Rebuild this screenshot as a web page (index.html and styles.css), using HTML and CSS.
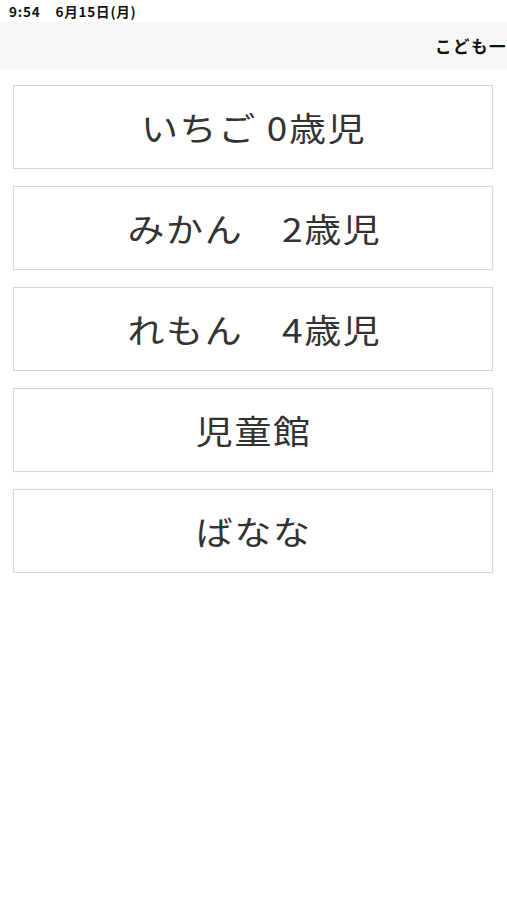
FILE: index.html
```html
<!DOCTYPE html>
<html lang="ja">
<head>
<meta charset="utf-8">
<title>こども</title>
<link rel="stylesheet" href="styles.css">
</head>
<body>
<div class="status">
  <span class="time">9:54</span>
  <span class="date">6月15日(月)</span>
</div>
<header class="nav">
  <span class="title">こども一ランド</span>
</header>
<main class="list">
  <div class="card"><span class="label">いちご 0歳児</span></div>
  <div class="card"><span class="label">みかん　2歳児</span></div>
  <div class="card"><span class="label">れもん　4歳児</span></div>
  <div class="card"><span class="label">児童館</span></div>
  <div class="card"><span class="label">ばなな</span></div>
</main>
</body>
</html>
```
FILE: styles.css
```css
html, body {
  margin: 0;
  padding: 0;
  background: #ffffff;
  width: 507px;
  overflow: hidden;
  font-family: "Noto Sans CJK JP", "Noto Sans", sans-serif;
}
.status {
  height: 22px;
  display: flex;
  align-items: center;
  gap: 15px;
  padding-left: 9px;
  font-size: 13.5px;
  font-weight: 700;
  color: #111;
  letter-spacing: 0.8px;
  background: #ffffff;
}
.nav {
  height: 48px;
  background: #f7f7f7;
  display: flex;
  align-items: center;
  padding-left: 435px;
  overflow: hidden;
  white-space: nowrap;
}
.title {
  font-size: 16.5px;
  font-weight: 700;
  color: #111;
  letter-spacing: 1.5px;
}
.list {
  display: flex;
  flex-direction: column;
  gap: 17px;
  padding: 15px 14px 0 13px;
}
.card {
  height: 82px;
  border: 1px solid #d8d8d8;
  box-shadow: 0 0 1px #e4e4e4;
  display: flex;
  align-items: center;
  justify-content: center;
  padding-left: 2px;
  font-size: 33px;
  letter-spacing: 1.5px;
  color: #333333;
  white-space: pre;
}
.label {
  display: inline-block;
  transform: scaleX(1.12);
}
```
